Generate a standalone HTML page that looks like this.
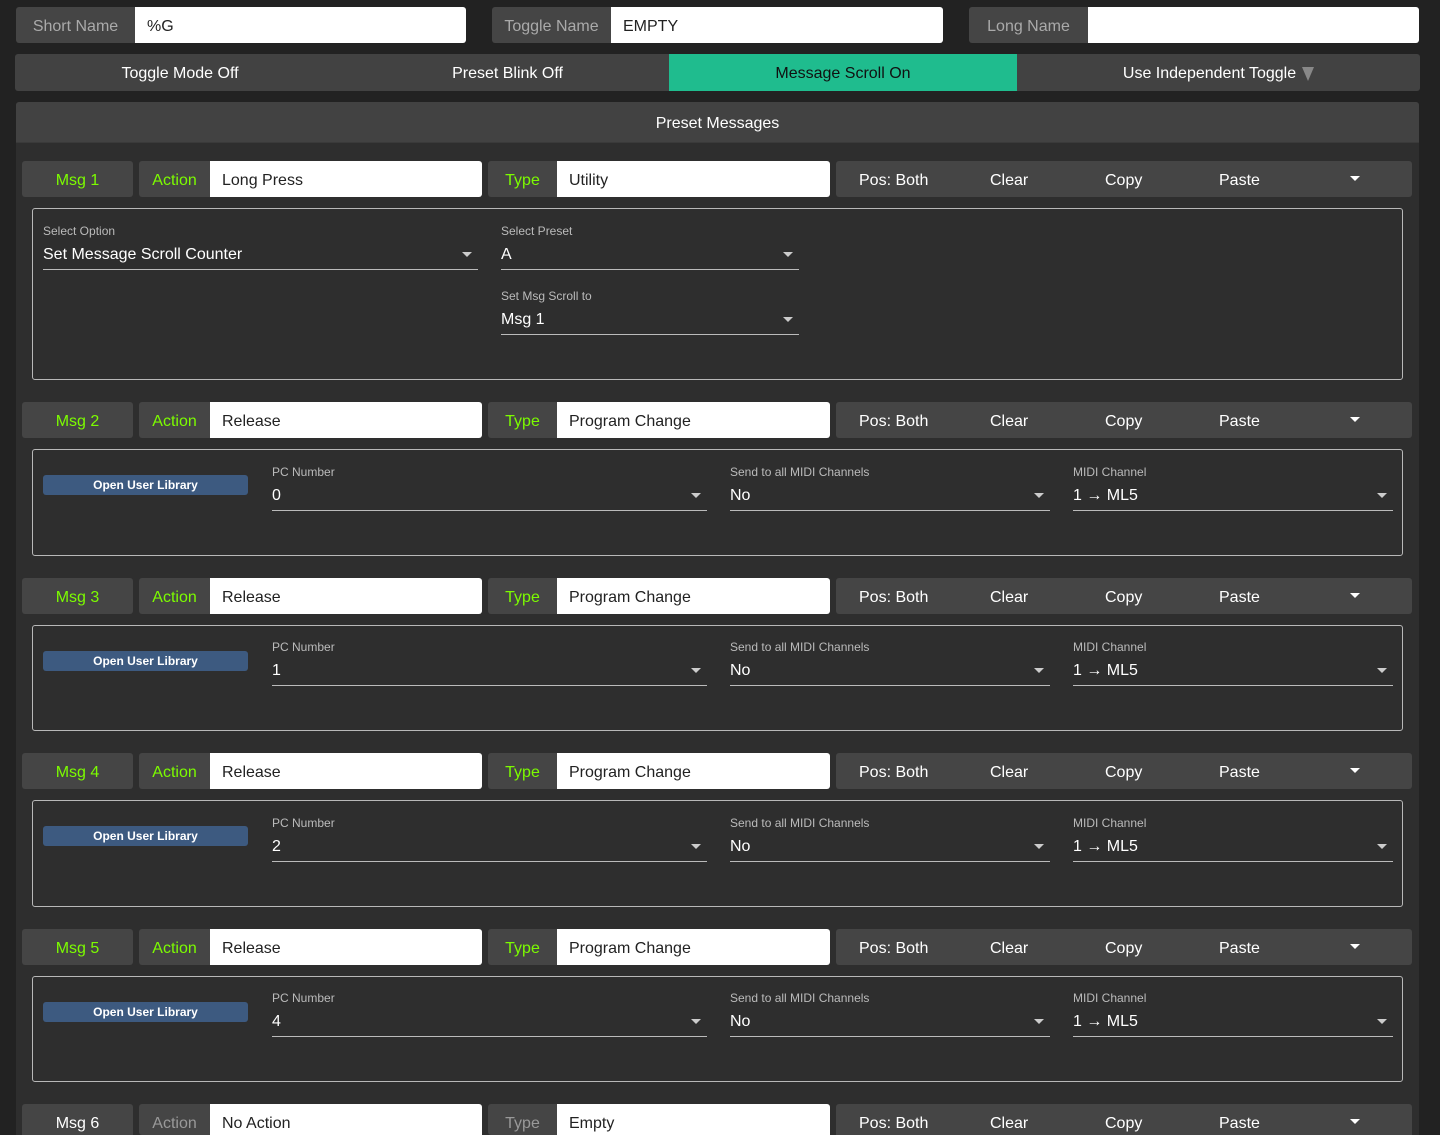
<!DOCTYPE html>
<html><head><meta charset="utf-8"><style>
*{box-sizing:border-box;margin:0;padding:0}
html{overflow:hidden;height:1135px;background:#222}
body{width:1440px;height:1135px;background:#222;font-family:"Liberation Sans",Arial,sans-serif;position:relative;overflow:hidden;color:#fff}
.a{position:absolute}
.c{display:flex;align-items:center;justify-content:center;padding-top:3px}
.lb{background:#454545;color:#aaa;font-size:16px;border-radius:3px 0 0 3px}
.in{background:#fff;color:#222;font-size:16px;display:flex;align-items:center;padding-left:12px;padding-top:3px;border-radius:0 3px 3px 0}
.g{color:#7cfc00}
.r{position:absolute;left:0;width:1440px;height:31px}
.bar{background:#454545;border-radius:3px;font-size:16px;color:#fff}
.bar span{position:absolute;top:11px}
.box{position:absolute;left:32px;width:1371px;border:1px solid #b8b8b8;border-radius:3px}
.f{position:absolute}
.f .l{font-size:12px;color:#bbb;position:absolute;top:0;left:0;white-space:nowrap}
.f .v{font-size:16px;color:#fff;position:absolute;top:22px;left:0;white-space:nowrap}
.f .ln{position:absolute;left:0;right:0;top:45px;height:1px;background:#bbb}
.f .ar{position:absolute;right:6px;top:28px;width:0;height:0;border-left:5px solid transparent;border-right:5px solid transparent;border-top:5px solid #ccc}
.btn{position:absolute;left:10px;width:205px;height:20px;background:#3d5a80;border-radius:3px;font-size:12px;font-weight:bold;color:#fff;padding-top:0}
.caret{position:absolute;left:514px;top:15px;width:0;height:0;border-left:5px solid transparent;border-right:5px solid transparent;border-top:5px solid #fff}
</style></head><body>
<div class="a lb c" style="left:16px;top:7px;width:119px;height:36px">Short Name</div>
<div class="a in" style="left:135px;top:7px;width:331px;height:36px">%G</div>
<div class="a lb c" style="left:492px;top:7px;width:119px;height:36px">Toggle Name</div>
<div class="a in" style="left:611px;top:7px;width:332px;height:36px">EMPTY</div>
<div class="a lb c" style="left:969px;top:7px;width:119px;height:36px">Long Name</div>
<div class="a in" style="left:1088px;top:7px;width:331px;height:36px"></div>

<div class="a" style="left:15px;top:54px;width:1405px;height:37px;background:#424242;border-radius:3px"></div>
<div class="a c" style="left:15px;top:54px;width:330px;height:37px;font-size:16px">Toggle Mode Off</div>
<div class="a c" style="left:345px;top:54px;width:325px;height:37px;font-size:16px">Preset Blink Off</div>
<div class="a c" style="left:669px;top:54px;width:348px;height:37px;font-size:16px;background:#1fbc8e;color:#111">Message Scroll On</div>
<div class="a c" style="left:1017px;top:54px;width:403px;height:37px;font-size:16px">Use Independent Toggle <span style="display:inline-block;margin-left:6px;width:0;height:0;border-left:6px solid transparent;border-right:6px solid transparent;border-top:14px solid #888"></span></div>

<div class="a" style="left:16px;top:102px;width:1403px;height:1033px;background:#2e2e2e;border-radius:3px 3px 0 0"></div>
<div class="a c" style="left:16px;top:102px;width:1403px;height:41px;background:#424242;font-size:16px;border-bottom:1px solid #3a3a3a;border-radius:3px 3px 0 0">Preset Messages</div>

<div class="r" style="top:161px">
 <div class="a lb c g" style="left:22px;top:0;width:111px;height:36px;border-radius:3px">Msg 1</div>
 <div class="a lb c g" style="left:139px;top:0;width:71px;height:36px">Action</div>
 <div class="a in" style="left:210px;top:0;width:272px;height:36px">Long Press</div>
 <div class="a lb c g" style="left:488px;top:0;width:69px;height:36px">Type</div>
 <div class="a in" style="left:557px;top:0;width:273px;height:36px">Utility</div>
 <div class="a bar" style="left:836px;top:0;width:576px;height:36px"><span style="left:23px">Pos: Both</span><span style="left:154px">Clear</span><span style="left:269px">Copy</span><span style="left:383px">Paste</span><i class="caret"></i></div>
</div>
<div class="box" style="top:208px;height:172px">
 <div class="f" style="left:10px;top:15px;width:435px"><div class="l">Select Option</div><div class="v">Set Message Scroll Counter</div><div class="ar"></div><div class="ln"></div></div>
 <div class="f" style="left:468px;top:15px;width:298px"><div class="l">Select Preset</div><div class="v">A</div><div class="ar"></div><div class="ln"></div></div>
 <div class="f" style="left:468px;top:80px;width:298px"><div class="l">Set Msg Scroll to</div><div class="v">Msg 1</div><div class="ar"></div><div class="ln"></div></div>
</div>

<div class="r" style="top:402px">
 <div class="a lb c g" style="left:22px;top:0;width:111px;height:36px;border-radius:3px">Msg 2</div>
 <div class="a lb c g" style="left:139px;top:0;width:71px;height:36px">Action</div>
 <div class="a in" style="left:210px;top:0;width:272px;height:36px">Release</div>
 <div class="a lb c g" style="left:488px;top:0;width:69px;height:36px">Type</div>
 <div class="a in" style="left:557px;top:0;width:273px;height:36px">Program Change</div>
 <div class="a bar" style="left:836px;top:0;width:576px;height:36px"><span style="left:23px">Pos: Both</span><span style="left:154px">Clear</span><span style="left:269px">Copy</span><span style="left:383px">Paste</span><i class="caret"></i></div>
 <div class="box" style="top:47px;height:107px">
  <div class="btn c" style="top:25px">Open User Library</div>
  <div class="f" style="left:239px;top:15px;width:435px"><div class="l">PC Number</div><div class="v">0</div><div class="ar"></div><div class="ln"></div></div>
  <div class="f" style="left:697px;top:15px;width:320px"><div class="l">Send to all MIDI Channels</div><div class="v">No</div><div class="ar"></div><div class="ln"></div></div>
  <div class="f" style="left:1040px;top:15px;width:320px"><div class="l">MIDI Channel</div><div class="v">1 → ML5</div><div class="ar"></div><div class="ln"></div></div>
 </div>
</div>
<div class="r" style="top:578px">
 <div class="a lb c g" style="left:22px;top:0;width:111px;height:36px;border-radius:3px">Msg 3</div>
 <div class="a lb c g" style="left:139px;top:0;width:71px;height:36px">Action</div>
 <div class="a in" style="left:210px;top:0;width:272px;height:36px">Release</div>
 <div class="a lb c g" style="left:488px;top:0;width:69px;height:36px">Type</div>
 <div class="a in" style="left:557px;top:0;width:273px;height:36px">Program Change</div>
 <div class="a bar" style="left:836px;top:0;width:576px;height:36px"><span style="left:23px">Pos: Both</span><span style="left:154px">Clear</span><span style="left:269px">Copy</span><span style="left:383px">Paste</span><i class="caret"></i></div>
 <div class="box" style="top:47px;height:106px">
  <div class="btn c" style="top:25px">Open User Library</div>
  <div class="f" style="left:239px;top:14px;width:435px"><div class="l">PC Number</div><div class="v">1</div><div class="ar"></div><div class="ln"></div></div>
  <div class="f" style="left:697px;top:14px;width:320px"><div class="l">Send to all MIDI Channels</div><div class="v">No</div><div class="ar"></div><div class="ln"></div></div>
  <div class="f" style="left:1040px;top:14px;width:320px"><div class="l">MIDI Channel</div><div class="v">1 → ML5</div><div class="ar"></div><div class="ln"></div></div>
 </div>
</div>
<div class="r" style="top:753px">
 <div class="a lb c g" style="left:22px;top:0;width:111px;height:36px;border-radius:3px">Msg 4</div>
 <div class="a lb c g" style="left:139px;top:0;width:71px;height:36px">Action</div>
 <div class="a in" style="left:210px;top:0;width:272px;height:36px">Release</div>
 <div class="a lb c g" style="left:488px;top:0;width:69px;height:36px">Type</div>
 <div class="a in" style="left:557px;top:0;width:273px;height:36px">Program Change</div>
 <div class="a bar" style="left:836px;top:0;width:576px;height:36px"><span style="left:23px">Pos: Both</span><span style="left:154px">Clear</span><span style="left:269px">Copy</span><span style="left:383px">Paste</span><i class="caret"></i></div>
 <div class="box" style="top:47px;height:107px">
  <div class="btn c" style="top:25px">Open User Library</div>
  <div class="f" style="left:239px;top:15px;width:435px"><div class="l">PC Number</div><div class="v">2</div><div class="ar"></div><div class="ln"></div></div>
  <div class="f" style="left:697px;top:15px;width:320px"><div class="l">Send to all MIDI Channels</div><div class="v">No</div><div class="ar"></div><div class="ln"></div></div>
  <div class="f" style="left:1040px;top:15px;width:320px"><div class="l">MIDI Channel</div><div class="v">1 → ML5</div><div class="ar"></div><div class="ln"></div></div>
 </div>
</div>
<div class="r" style="top:929px">
 <div class="a lb c g" style="left:22px;top:0;width:111px;height:36px;border-radius:3px">Msg 5</div>
 <div class="a lb c g" style="left:139px;top:0;width:71px;height:36px">Action</div>
 <div class="a in" style="left:210px;top:0;width:272px;height:36px">Release</div>
 <div class="a lb c g" style="left:488px;top:0;width:69px;height:36px">Type</div>
 <div class="a in" style="left:557px;top:0;width:273px;height:36px">Program Change</div>
 <div class="a bar" style="left:836px;top:0;width:576px;height:36px"><span style="left:23px">Pos: Both</span><span style="left:154px">Clear</span><span style="left:269px">Copy</span><span style="left:383px">Paste</span><i class="caret"></i></div>
 <div class="box" style="top:47px;height:106px">
  <div class="btn c" style="top:25px">Open User Library</div>
  <div class="f" style="left:239px;top:14px;width:435px"><div class="l">PC Number</div><div class="v">4</div><div class="ar"></div><div class="ln"></div></div>
  <div class="f" style="left:697px;top:14px;width:320px"><div class="l">Send to all MIDI Channels</div><div class="v">No</div><div class="ar"></div><div class="ln"></div></div>
  <div class="f" style="left:1040px;top:14px;width:320px"><div class="l">MIDI Channel</div><div class="v">1 → ML5</div><div class="ar"></div><div class="ln"></div></div>
 </div>
</div>
<div class="r" style="top:1104px">
 <div class="a lb c" style="left:22px;top:0;width:111px;height:31px;border-radius:3px 3px 0 0;color:#fff;padding-top:8px">Msg 6</div>
 <div class="a lb c" style="left:139px;top:0;width:71px;height:31px;color:#999;padding-top:8px">Action</div>
 <div class="a in" style="left:210px;top:0;width:272px;height:31px;padding-top:8px;border-radius:0 3px 0 0">No Action</div>
 <div class="a lb c" style="left:488px;top:0;width:69px;height:31px;color:#999;padding-top:8px">Type</div>
 <div class="a in" style="left:557px;top:0;width:273px;height:31px;padding-top:8px;border-radius:0 3px 0 0">Empty</div>
 <div class="a bar" style="left:836px;top:0;width:576px;height:31px;border-radius:3px 3px 0 0"><span style="left:23px">Pos: Both</span><span style="left:154px">Clear</span><span style="left:269px">Copy</span><span style="left:383px">Paste</span><i class="caret"></i></div>
</div>
</body></html>
